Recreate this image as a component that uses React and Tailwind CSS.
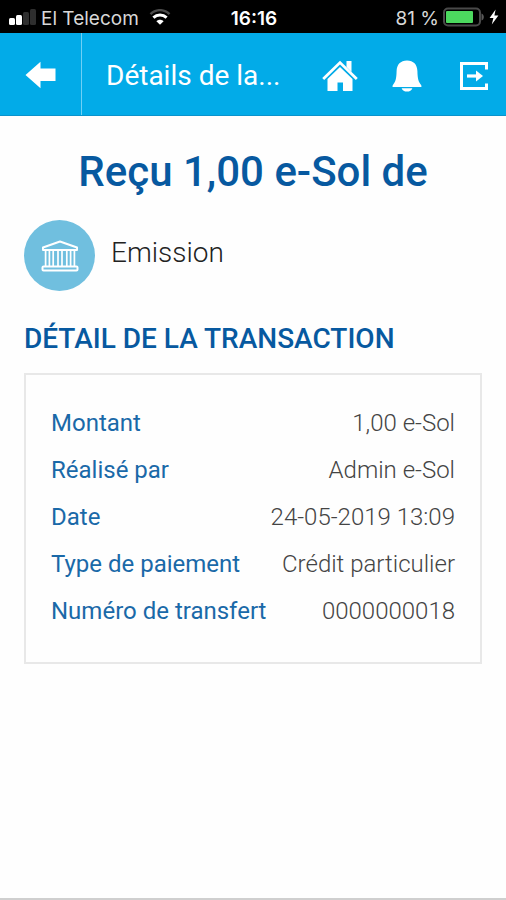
const details = [
  { label: "Montant", value: "1,00 e-Sol" },
  { label: "Réalisé par", value: "Admin e-Sol" },
  { label: "Date", value: "24-05-2019 13:09" },
  { label: "Type de paiement", value: "Crédit particulier" },
  { label: "Numéro de transfert", value: "0000000018" },
];

function SignalIcon() {
  return (
    <svg width="28" height="18" viewBox="0 0 28 18" aria-hidden="true">
      <rect x="0" y="10" width="6" height="7" rx="1.5" fill="#fff" />
      <rect x="7" y="7" width="6" height="10" rx="1.5" fill="#fff" />
      <rect x="14" y="4" width="6" height="13" rx="1.5" fill="#2e2e2e" />
      <rect x="21" y="1" width="6" height="16" rx="1.5" fill="#2e2e2e" />
    </svg>
  );
}

function WifiIcon() {
  return (
    <svg width="22" height="16" viewBox="0 0 22 16" fill="none" aria-hidden="true">
      <path d="M1.5 5.2C7 -0.2 15 -0.2 20.5 5.2" stroke="#4a4a4a" strokeWidth="2.4" />
      <path d="M4.4 8.6C8.2 5 13.8 5 17.6 8.6" stroke="#fff" strokeWidth="3" />
      <path d="M7.4 12.2C9.4 10.2 12.6 10.2 14.6 12.2L11 15.8Z" fill="#fff" />
    </svg>
  );
}

function BatteryIcon() {
  return (
    <svg width="42" height="20" viewBox="0 0 42 20" fill="none" aria-hidden="true">
      <rect x="1" y="1.5" width="36" height="17" rx="4" stroke="#4a4a4a" strokeWidth="2" />
      <rect x="3" y="4" width="27" height="12" rx="1" fill="#4cd95f" />
      <path d="M38.5 6.5C41.6 7.5 41.6 12.5 38.5 13.5Z" fill="#5a5a5a" />
    </svg>
  );
}

function BoltIcon() {
  return (
    <svg width="10" height="16" viewBox="0 0 10 16" fill="#fff" aria-hidden="true">
      <path d="M6.6 0.5L0.6 9H4.4L2.8 15.5L9.4 6.6H5.4Z" />
    </svg>
  );
}

function BackIcon() {
  return (
    <svg width="32" height="28" viewBox="0 0 32 28" fill="#fff" aria-hidden="true">
      <path d="M0.5 14L15.5 0.8V7.6H30.5V20H15.5V27.2Z" />
    </svg>
  );
}

function HomeIcon() {
  return (
    <svg width="36" height="32" viewBox="0 0 36 32" aria-hidden="true">
      <path d="M24.5 1H29.5V12L24.5 7Z" fill="#fff" />
      <path d="M1.2 19L18 2.6L34.8 19" fill="none" stroke="#fff" strokeWidth="2.8" />
      <path d="M18 7L30.5 19V31H21V22.5H15.5V31H5.5V19Z" fill="#fff" />
    </svg>
  );
}

function BellIcon() {
  return (
    <svg width="30" height="32" viewBox="0 0 30 32" fill="#fff" aria-hidden="true">
      <path d="M15 0.5C8.5 0.5 4.8 4.6 4.6 11C4.4 19 3.6 21.5 0.8 25.2C0.2 26.2 0.4 27 1.4 27H28.6C29.6 27 29.8 26.2 29.2 25.2C26.4 21.5 25.6 19 25.4 11C25.2 4.6 21.5 0.5 15 0.5Z" />
      <path d="M9.6 28.2H20.4C19.6 30.4 17.6 31.6 15 31.6S10.4 30.4 9.6 28.2Z" />
    </svg>
  );
}

function LogoutIcon() {
  return (
    <svg width="30" height="30" viewBox="0 0 30 30" fill="none" stroke="#fff" aria-hidden="true">
      <path d="M27.5 8.5V2.5H2.5V27.5H27.5V22.5" strokeWidth="3" />
      <path d="M8 15H19" strokeWidth="3.2" />
      <path d="M17 9.5L24 15L17 20.5Z" fill="#fff" stroke="none" />
    </svg>
  );
}

function BankIcon() {
  return (
    <svg
      width="38"
      height="32"
      viewBox="0 0 38 32"
      fill="none"
      stroke="#fff"
      strokeWidth="2"
      strokeLinejoin="round"
      aria-hidden="true"
    >
      <path d="M2 7.5L19 1.5L36 7.5V10H2Z" />
      <path d="M4.6 10V26M8.4 10V26M12.2 10V26M17 10V26M21 10V26M25.8 10V26M29.6 10V26M33.4 10V26" strokeWidth="1.7" />
      <rect x="1.5" y="26.5" width="35" height="4" rx="1" />
    </svg>
  );
}

function StatusBar() {
  return (
    <div className="grid h-[33px] grid-cols-[1fr_auto_1fr] items-center bg-black pl-[9px] pr-[7px] font-['Inter','Liberation_Sans',sans-serif] text-[19px] leading-6 text-[#d8d8d8]">
      <div className="flex items-center gap-1">
        <SignalIcon />
        <span className="whitespace-nowrap pt-1">El Telecom</span>
        <span className="pl-1.5">
          <WifiIcon />
        </span>
      </div>
      <span className="pt-1 font-semibold text-white">16:16</span>
      <div className="flex items-center justify-end gap-1">
        <span className="whitespace-nowrap pt-1">81 %</span>
        <BatteryIcon />
        <BoltIcon />
      </div>
    </div>
  );
}

function Toolbar() {
  return (
    <header className="flex h-[83px] items-stretch border-b border-[#0a93cc] bg-[#02abe8] text-white">
      <button
        type="button"
        aria-label="Retour"
        className="flex w-[82px] items-center justify-center border-r border-[#6fd0f5] pt-0.5"
      >
        <BackIcon />
      </button>
      <h1 className="min-w-0 flex-1 self-center truncate pl-6 pt-1 text-[28px] leading-9">Détails de la...</h1>
      <nav className="flex items-center gap-[31px] pr-[14px] pt-1">
        <button type="button" aria-label="Accueil" className="flex w-9 justify-center">
          <HomeIcon />
        </button>
        <button type="button" aria-label="Notifications" className="flex w-9 justify-center">
          <BellIcon />
        </button>
        <button type="button" aria-label="Déconnexion" className="flex w-9 justify-center">
          <LogoutIcon />
        </button>
      </nav>
    </header>
  );
}

export default function App() {
  return (
    <div className="flex min-h-screen flex-col border-b-2 border-[#cfcfcf] bg-[#fefefe] font-['Roboto','Liberation_Sans',sans-serif]">
      <StatusBar />
      <Toolbar />

      <main className="px-6 pt-8">
        <h2 className="text-center text-[42px] font-medium leading-[48px] text-[#0759a0]">Reçu 1,00 e-Sol de</h2>

        <div className="mt-6 flex items-center gap-4">
          <div className="flex size-[71px] items-center justify-center rounded-full bg-[#70bfdf]">
            <BankIcon />
          </div>
          <p className="pb-1.5 text-[28px] font-light leading-9 text-[#222]">Emission</p>
        </div>

        <h3 className="mt-8 whitespace-nowrap text-[28px] font-medium leading-8 text-[#0759a0]">
          DÉTAIL DE LA TRANSACTION
        </h3>

        <div className="mt-[18px] border-2 border-[#e8e8e8] px-[25px] pb-7 pt-6">
          <table className="w-full text-[24px] leading-8">
            <tbody>
              {details.map((row) => (
                <tr key={row.label} className="h-[47px]">
                  <th scope="row" className="p-0 text-left font-normal text-[#1a69a8]">
                    {row.label}
                  </th>
                  <td className="p-0 text-right font-light text-[#444]">{row.value}</td>
                </tr>
              ))}
            </tbody>
          </table>
        </div>
      </main>
    </div>
  );
}
